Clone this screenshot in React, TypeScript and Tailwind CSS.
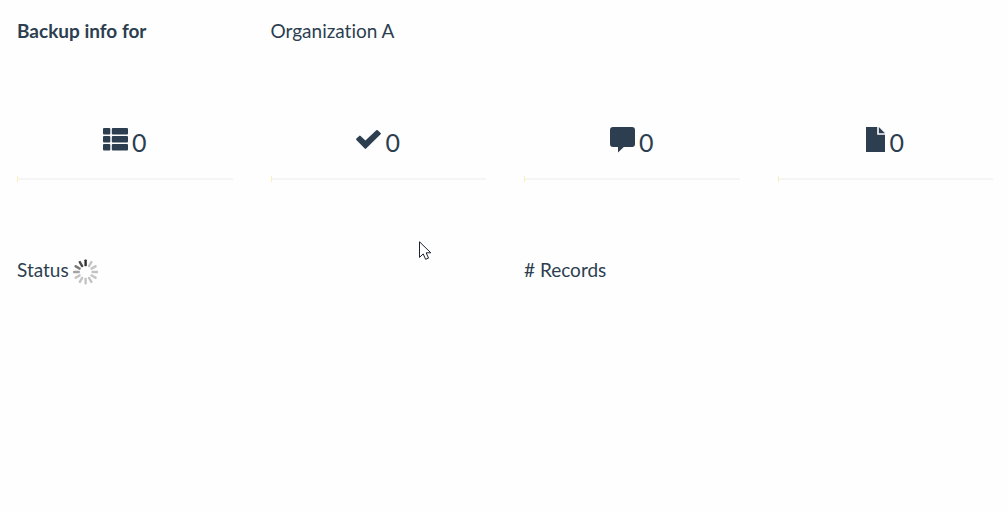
import type { ReactNode } from 'react';

// ─── Types ────────────────────────────────────────────────────────────────────

interface Stat {
  id: string;
  label: string;
  count: number;
  icon: ReactNode;
}

// ─── Icons ────────────────────────────────────────────────────────────────────

const ListIcon = () => (
  <svg width="25" height="25" viewBox="0 0 25 25" fill="currentColor" aria-hidden="true">
    {[1, 9, 17].map((y) => (
      <g key={y}>
        <rect x="0" y={y} width="7.3" height="6.6" rx="1" />
        <rect x="8.8" y={y} width="16.2" height="6.6" rx="1" />
      </g>
    ))}
  </svg>
);

const CheckIcon = () => (
  <svg width="25" height="25" viewBox="0 0 25 25" fill="currentColor" aria-hidden="true">
    <path d="M.4 11.6 3.2 8.9q.7-.6 1.4 0L9.4 13.6 20.3 3.2q.7-.6 1.4 0l2.9 2.7q.7.7 0 1.4L10.1 21.6q-.7.6-1.4 0L.4 13q-.6-.7 0-1.4Z" />
  </svg>
);

const CommentIcon = () => (
  <svg className="overflow-visible" width="25" height="25" viewBox="0 0 25 25" fill="currentColor" aria-hidden="true">
    <path d="M3 0h19a3 3 0 0 1 3 3v14a3 3 0 0 1-3 3h-8.2L8 25.4V20H3a3 3 0 0 1-3-3V3a3 3 0 0 1 3-3Z" />
  </svg>
);

const FileIcon = () => (
  <svg width="19" height="25" viewBox="0 0 19 25" fill="currentColor" aria-hidden="true">
    <path d="M0 0h11.2v7.8H19V25H0Z" />
    <path d="M12.8 0 19 6.2h-6.2Z" />
  </svg>
);

// Spokes run clockwise from the top, darkest at the head
const SPOKES = ['#2e2e2e', '#c4c4c4', '#c4c4c4', '#c4c4c4', '#c4c4c4', '#c4c4c4', '#c4c4c4', '#c4c4c4', '#c4c4c4', '#a3a3a3', '#777777', '#4d4d4d'];

const Spinner = () => (
  <svg className="mt-0.5" width="26" height="26" viewBox="0 0 26 26" role="img" aria-label="Loading">
    {SPOKES.map((color, i) => (
      <rect key={i} x="11.4" y="0.4" width="2.4" height="6.8" rx="0.8" fill={color} transform={`rotate(${i * 30} 12.6 13)`} />
    ))}
  </svg>
);

const Cursor = () => (
  <svg className="absolute left-[419px] top-[241px]" width="13" height="20" viewBox="0 0 13 20" aria-hidden="true">
    <path d="M.5.8v15.6l3.7-3.5 2.4 5.4 2.9-1.2-2.3-5.3h4.6Z" fill="#fff" stroke="#1c2233" strokeWidth="1" />
  </svg>
);

// ─── Data ─────────────────────────────────────────────────────────────────────

const STATS: Stat[] = [
  { id: 'total', label: 'Records', count: 0, icon: <ListIcon /> },
  { id: 'done', label: 'Completed', count: 0, icon: <CheckIcon /> },
  { id: 'comments', label: 'Comments', count: 0, icon: <CommentIcon /> },
  { id: 'files', label: 'Files', count: 0, icon: <FileIcon /> },
];

// ─── Components ───────────────────────────────────────────────────────────────

function StatCard({ stat }: { stat: Stat }) {
  return (
    <div>
      <div className="flex items-start justify-center gap-1 text-[25px] leading-[30px]" title={stat.label}>
        {stat.icon}
        <span>{stat.count}</span>
      </div>
      <div className="mt-[19px] flex h-[6px] items-center">
        <div className="h-[6px] w-px bg-[#fdeeb5]" />
        <div className="h-[2px] flex-1 bg-[#f5f5f5]" />
      </div>
    </div>
  );
}

// ─── Main Page ────────────────────────────────────────────────────────────────

export default function App() {
  return (
    <div className="relative min-h-screen bg-[#fefefe] pt-[18px] pr-[15px] pl-[17px] font-['Lato',sans-serif] text-[19px] leading-[26px] text-[#2c3e50] [font-variant-ligatures:none]">
      {/* Header */}
      <div className="grid grid-cols-4 gap-x-[38px]">
        <h1 className="font-bold">Backup info for</h1>
        <p>Organization A</p>
      </div>

      {/* Counters */}
      <div className="mt-[83px] grid grid-cols-4 gap-x-[38px]">
        {STATS.map((stat) => (
          <StatCard key={stat.id} stat={stat} />
        ))}
      </div>

      {/* Details */}
      <div className="mt-[75px] grid grid-cols-2 gap-x-[38px]">
        <div className="flex items-start gap-1">
          <span>Status</span>
          <Spinner />
        </div>
        <p># Records</p>
      </div>

      <Cursor />
    </div>
  );
}
